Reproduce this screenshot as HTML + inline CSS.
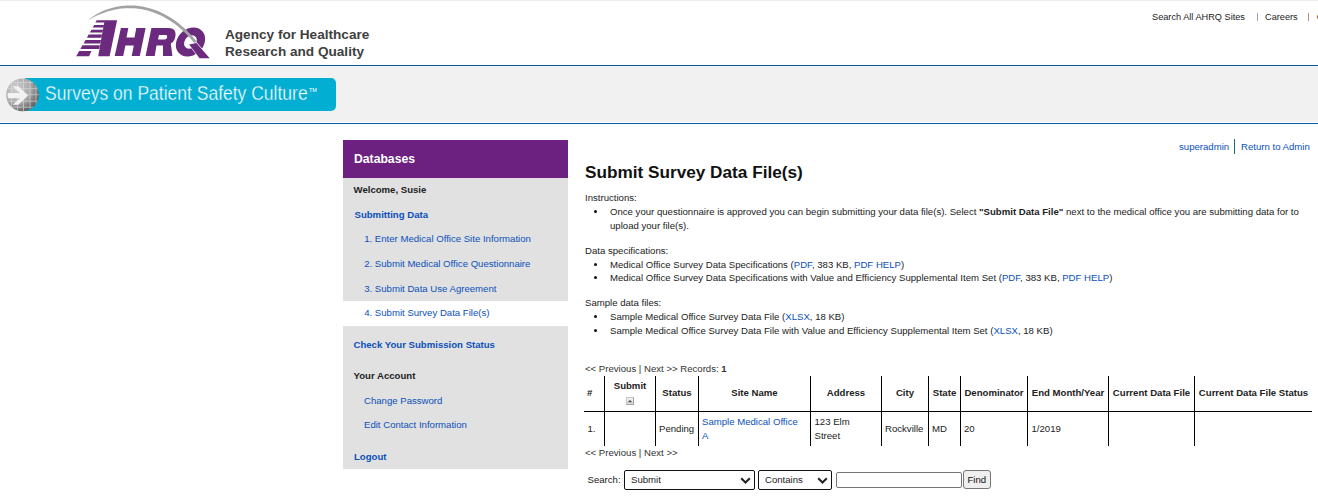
<!DOCTYPE html>
<html><head><meta charset="utf-8"><style>
html,body{margin:0;padding:0;background:#fff;width:1318px;height:497px;overflow:hidden;position:relative}
body{font-family:"Liberation Sans",sans-serif}
.t{position:absolute;white-space:nowrap;line-height:20px}
.r{position:absolute}
</style></head><body>
<div class="r" style="left:0px;top:0px;width:1318px;height:1px;background:#ececec;"></div>
<div class="r" style="left:0px;top:65px;width:1318px;height:1px;background:#03599a;"></div>
<div class="r" style="left:0px;top:66px;width:1318px;height:56px;background:#f1f1f1;"></div>
<div class="r" style="left:0px;top:123px;width:1318px;height:1px;background:#03599a;"></div>
<svg class="r" style="left:0;top:0" width="220" height="64" viewBox="0 0 220 64">
<g fill="#6b2a7d">
<path d="M104.6,20.2 L117.1,20.2 L109.6,56.3 L98.2,56.3 Z"/>
<path d="M96.7,20.2 L105,20.2 L104.5,22.6 L95.4,22.6 Z"/>
<path d="M94.2,24.9 L104,24.9 L103.5,27.4 L92.8,27.4 Z"/>
<path d="M91.5,29.7 L103,29.7 L102.4,32.5 L89.9,32.5 Z"/>
<path d="M88.6,34.6 L102,34.6 L101.4,37.7 L86.9,37.7 Z"/>
<path d="M85.5,40 L101,40 L100.3,43.4 L83.6,43.4 Z"/>
<path d="M82.4,45.3 L100,45.3 L99.2,49 L80.4,49 Z"/>
<path d="M79.2,51 L91.5,51 L89,56.3 L76.2,56.3 Z"/>
<path d="M120.9,28 L128.3,28 L126.5,37.4 L134.5,37.4 L136.3,28 L145.6,28 L139.8,56 L131.7,56 L133.8,45.6 L125.4,45.6 L123.2,56 L114.7,56 Z"/>
<path fill-rule="evenodd" d="M151.4,28 L168.5,28 C174,28 176,31 175.5,35.5 C175,40 173,42.5 170.8,43.6 L172.4,56 L163,56 L163,45.5 L156.5,45.5 L154.7,56 L145.6,56 Z M159,34.9 L165.9,34.9 C167.2,34.9 167.4,36.4 167,37.6 C166.6,39 165.6,39.6 164,39.6 L158,39.6 Z"/>
<path fill-rule="evenodd" transform="translate(190.5,42.1) skewX(-12)" d="M-14.3,0 A14.3,14.5 0 1 0 14.3,0 A14.3,14.5 0 1 0 -14.3,0 Z M-6.3,-0.1 A6.3,6.65 0 1 0 6.3,-0.1 A6.3,6.65 0 1 0 -6.3,-0.1 Z"/>
</g>
<path d="M89.43,19.41 L91.45,18.30 L93.46,17.26 L95.47,16.28 L97.47,15.37 L99.48,14.53 L101.48,13.75 L103.46,13.00 L105.42,12.26 L107.38,11.60 L109.34,10.99 L111.30,10.44 L113.26,9.95 L115.21,9.52 L117.16,9.15 L119.11,8.84 L121.05,8.58 L122.99,8.39 L124.92,8.24 L126.85,8.16 L128.77,8.13 L130.69,8.14 L132.60,8.19 L134.50,8.30 L136.40,8.47 L138.29,8.68 L140.18,8.95 L142.05,9.27 L143.92,9.64 L145.78,10.06 L147.63,10.53 L149.46,11.05 L151.29,11.63 L153.11,12.25 L154.92,12.91 L156.71,13.63 L158.49,14.39 L160.26,15.20 L162.02,16.06 L163.76,16.96 L165.49,17.91 L167.20,18.90 L168.90,19.94 L170.58,21.02 L172.24,22.14 L173.89,23.31 L175.52,24.52 L177.13,25.77 L178.72,27.07 L180.29,28.40 L181.85,29.78 L183.38,31.19 L184.89,32.64 L186.39,34.14 L187.85,35.67 L189.30,37.24 L190.73,38.85 L192.13,40.49 L193.50,42.17 L194.86,43.90 L197.14,42.10 L195.76,40.36 L194.34,38.64 L192.90,36.95 L191.43,35.31 L189.94,33.70 L188.43,32.13 L186.90,30.60 L185.34,29.11 L183.76,27.66 L182.15,26.25 L180.53,24.88 L178.89,23.55 L177.23,22.27 L175.54,21.02 L173.84,19.82 L172.12,18.67 L170.38,17.56 L168.63,16.49 L166.86,15.47 L165.07,14.49 L163.27,13.57 L161.45,12.68 L159.61,11.85 L157.77,11.07 L155.91,10.33 L154.03,9.64 L152.15,9.00 L150.25,8.42 L148.34,7.88 L146.42,7.39 L144.49,6.96 L142.54,6.58 L140.59,6.25 L138.64,5.98 L136.67,5.76 L134.70,5.60 L132.72,5.49 L130.73,5.43 L128.74,5.44 L126.74,5.52 L124.74,5.66 L122.74,5.86 L120.73,6.12 L118.73,6.43 L116.72,6.80 L114.71,7.24 L112.71,7.73 L110.70,8.28 L108.70,8.90 L106.69,9.58 L104.70,10.32 L102.70,11.12 L100.72,12.02 L98.77,13.03 L96.83,14.09 L94.90,15.22 L92.98,16.41 L91.07,17.67 L89.17,18.99Z" fill="#a0a2a4"/>
<path d="M189.2,44.5 L196.4,42.9 L209.7,58.2 L199.6,58.2 Z" fill="#6b2a7d" stroke="#fff" stroke-width="1.1" paint-order="stroke"/>
</svg>
<div class="t" style="left:225px;top:25px;font-size:13.6px;font-weight:bold;color:#404040;">Agency for Healthcare</div>
<div class="t" style="left:225px;top:42px;font-size:13.6px;font-weight:bold;color:#404040;">Research and Quality</div>
<div class="t" style="left:1152px;top:7px;font-size:9.2px;color:#222;">Search All AHRQ Sites</div>
<div class="r" style="left:1257px;top:13px;width:1px;height:8px;background:#96a0c8;"></div>
<div class="t" style="left:1265px;top:7px;font-size:9.2px;color:#222;">Careers</div>
<div class="r" style="left:1308px;top:13px;width:1px;height:8px;background:#b88c90;"></div>
<div class="t" style="left:1316.8px;top:7px;font-size:9.2px;color:#222;">Contact Us</div>
<div class="r" style="left:25px;top:78px;width:311px;height:33px;background:#02afd3;border-radius:0 5px 5px 0"></div>
<svg class="r" style="left:5px;top:77px" width="36" height="36" viewBox="0 0 36 36">
<defs><radialGradient id="cg" cx="0.3" cy="0.3" r="0.85"><stop offset="0" stop-color="#d0d0d0"/><stop offset="0.55" stop-color="#a6a6a6"/><stop offset="0.9" stop-color="#5e5e5e"/><stop offset="1" stop-color="#8a8a8a"/></radialGradient>
<clipPath id="cc"><circle cx="17.5" cy="17.9" r="16.3"/></clipPath></defs>
<circle cx="17.5" cy="17.9" r="16.3" fill="url(#cg)"/>
<g clip-path="url(#cc)" stroke="#dcdcdc" stroke-width="0.9" opacity="0.7">
<path d="M0,5.6H36M0,11.7H36M0,17.7H36M0,24.2H36M0,30.2H36M6.5,0V36M12.5,0V36M18.5,0V36M25,0V36M31,0V36"/>
</g>
<path d="M2.8,16.1 L14.9,16.1 L7.7,9.3 L13.3,9.3 L23,18.6 L13.3,27.8 L7.7,27.8 L14.9,21.2 L2.8,21.2 Z" fill="#f2f2f2"/>
</svg>
<div class="t" style="left:45px;top:83px;font-size:20px;color:#fff;transform-origin:0 0;transform:scaleX(0.875);-webkit-text-stroke:0.35px #04b0d3">Surveys on Patient Safety Culture</div>
<div class="t" style="left:309px;top:80px;font-size:5.5px;color:#fff;">TM</div>
<div class="r" style="left:343px;top:140px;width:225px;height:38px;background:#6c2180;"></div>
<div class="r" style="left:343px;top:178px;width:225px;height:123px;background:#e1e1e1;"></div>
<div class="r" style="left:343px;top:326px;width:225px;height:143px;background:#e1e1e1;"></div>
<div class="t" style="left:354px;top:149px;font-size:12.2px;font-weight:bold;color:#fff;">Databases</div>
<div class="t" style="left:353.5px;top:180px;font-size:9.6px;font-weight:bold;color:#222;">Welcome, Susie</div>
<div class="t" style="left:354.5px;top:205px;font-size:9.6px;font-weight:bold;color:#0a50bb;">Submitting Data</div>
<div class="t" style="left:364.2px;top:229px;font-size:9.6px;color:#0a50bb;">1. Enter Medical Office Site Information</div>
<div class="t" style="left:364.2px;top:254px;font-size:9.6px;color:#0a50bb;">2. Submit Medical Office Questionnaire</div>
<div class="t" style="left:364.2px;top:279px;font-size:9.6px;color:#0a50bb;">3. Submit Data Use Agreement</div>
<div class="t" style="left:364.2px;top:303px;font-size:9.6px;color:#0a50bb;">4. Submit Survey Data File(s)</div>
<div class="t" style="left:353.5px;top:335px;font-size:9.6px;font-weight:bold;color:#0a50bb;">Check Your Submission Status</div>
<div class="t" style="left:353.5px;top:366px;font-size:9.6px;font-weight:bold;color:#222;">Your Account</div>
<div class="t" style="left:364px;top:391px;font-size:9.6px;color:#0a50bb;">Change Password</div>
<div class="t" style="left:364px;top:415px;font-size:9.6px;color:#0a50bb;">Edit Contact Information</div>
<div class="t" style="left:354px;top:447px;font-size:9.6px;font-weight:bold;color:#0a50bb;">Logout</div>
<div class="t" style="left:1179px;top:137px;font-size:9.6px;color:#0a50bb;">superadmin</div>
<div class="r" style="left:1234px;top:139px;width:1px;height:15px;background:#1d6878;"></div>
<div class="t" style="left:1241px;top:137px;font-size:9.6px;color:#0a50bb;">Return to Admin</div>
<div class="t" style="left:585px;top:162px;font-size:17.2px;font-weight:bold;color:#111;">Submit Survey Data File(s)</div>
<div class="t" style="left:585px;top:188px;font-size:9.6px;color:#222;">Instructions:</div>
<div class="r" style="left:593.8px;top:210.2px;width:3.2px;height:3.2px;border-radius:50%;background:#111"></div>
<div class="t" style="left:610px;top:202px;font-size:9.6px;color:#222;">Once your questionnaire is approved you can begin submitting your data file(s). Select <b>"Submit Data File"</b> next to the medical office you are submitting data for to</div>
<div class="t" style="left:610px;top:216px;font-size:9.6px;color:#222;">upload your file(s).</div>
<div class="t" style="left:585px;top:241px;font-size:9.6px;color:#222;">Data specifications:</div>
<div class="r" style="left:593.8px;top:263.2px;width:3.2px;height:3.2px;border-radius:50%;background:#111"></div>
<div class="t" style="left:610px;top:255px;font-size:9.6px;color:#222;">Medical Office Survey Data Specifications (<span style="color:#0a50bb">PDF</span>, 383 KB, <span style="color:#0a50bb">PDF HELP</span>)</div>
<div class="r" style="left:593.8px;top:276.2px;width:3.2px;height:3.2px;border-radius:50%;background:#111"></div>
<div class="t" style="left:610px;top:268px;font-size:9.6px;color:#222;">Medical Office Survey Data Specifications with Value and Efficiency Supplemental Item Set (<span style="color:#0a50bb">PDF</span>, 383 KB, <span style="color:#0a50bb">PDF HELP</span>)</div>
<div class="t" style="left:585px;top:293px;font-size:9.6px;color:#222;">Sample data files:</div>
<div class="r" style="left:593.8px;top:315.2px;width:3.2px;height:3.2px;border-radius:50%;background:#111"></div>
<div class="t" style="left:610px;top:307px;font-size:9.6px;color:#222;">Sample Medical Office Survey Data File (<span style="color:#0a50bb">XLSX</span>, 18 KB)</div>
<div class="r" style="left:593.8px;top:329.2px;width:3.2px;height:3.2px;border-radius:50%;background:#111"></div>
<div class="t" style="left:610px;top:321px;font-size:9.6px;color:#222;">Sample Medical Office Survey Data File with Value and Efficiency Supplemental Item Set (<span style="color:#0a50bb">XLSX</span>, 18 KB)</div>
<div class="t" style="left:585px;top:359px;font-size:9.6px;color:#333;">&lt;&lt; Previous | Next &gt;&gt; Records: <b>1</b></div>
<div class="r" style="left:584px;top:411px;width:728px;height:1px;background:#000;"></div>
<div class="r" style="left:604px;top:376px;width:1px;height:70px;background:#000;"></div>
<div class="r" style="left:655px;top:376px;width:1px;height:70px;background:#000;"></div>
<div class="r" style="left:698px;top:376px;width:1px;height:70px;background:#000;"></div>
<div class="r" style="left:810px;top:376px;width:1px;height:70px;background:#000;"></div>
<div class="r" style="left:881px;top:376px;width:1px;height:70px;background:#000;"></div>
<div class="r" style="left:928px;top:376px;width:1px;height:70px;background:#000;"></div>
<div class="r" style="left:960px;top:376px;width:1px;height:70px;background:#000;"></div>
<div class="r" style="left:1027px;top:376px;width:1px;height:70px;background:#000;"></div>
<div class="r" style="left:1108px;top:376px;width:1px;height:70px;background:#000;"></div>
<div class="r" style="left:1194px;top:376px;width:1px;height:70px;background:#000;"></div>
<div class="t" style="left:587px;top:383px;font-size:9.6px;font-weight:bold;color:#222;">#</div>
<div class="t" style="left:605px;width:50px;text-align:center;top:376px;font-size:9.6px;font-weight:bold;color:#222">Submit</div>
<div class="r" style="left:626px;top:397px;width:8px;height:8px;box-sizing:border-box;border:1px solid #c6c6c6;border-right-color:#a4a4a4;border-bottom-color:#a4a4a4;background:linear-gradient(#f4f4f4,#dadada)"></div><svg class="r" style="left:626px;top:397px" width="8" height="8"><path d="M1.7,5.3 L4,2.9 L6.3,5.3 Z" fill="#4a4a4a"/></svg>
<div class="t" style="left:656px;width:42px;text-align:center;top:383px;font-size:9.6px;font-weight:bold;color:#222">Status</div>
<div class="t" style="left:699px;width:111px;text-align:center;top:383px;font-size:9.6px;font-weight:bold;color:#222">Site Name</div>
<div class="t" style="left:811px;width:70px;text-align:center;top:383px;font-size:9.6px;font-weight:bold;color:#222">Address</div>
<div class="t" style="left:882px;width:46px;text-align:center;top:383px;font-size:9.6px;font-weight:bold;color:#222">City</div>
<div class="t" style="left:929px;width:31px;text-align:center;top:383px;font-size:9.6px;font-weight:bold;color:#222">State</div>
<div class="t" style="left:961px;width:66px;text-align:center;top:383px;font-size:9.6px;font-weight:bold;color:#222">Denominator</div>
<div class="t" style="left:1028px;width:80px;text-align:center;top:383px;font-size:9.6px;font-weight:bold;color:#222">End Month/Year</div>
<div class="t" style="left:1109px;width:85px;text-align:center;top:383px;font-size:9.6px;font-weight:bold;color:#222">Current Data File</div>
<div class="t" style="left:1195px;width:117px;text-align:center;top:383px;font-size:9.6px;font-weight:bold;color:#222">Current Data File Status</div>
<div class="t" style="left:587.5px;top:419px;font-size:9.6px;color:#222;">1.</div>
<div class="t" style="left:659px;top:419px;font-size:9.6px;color:#222;">Pending</div>
<div class="t" style="left:702px;top:412px;font-size:9.6px;color:#0a50bb;">Sample Medical Office</div>
<div class="t" style="left:702px;top:426px;font-size:9.6px;color:#0a50bb;">A</div>
<div class="t" style="left:814.5px;top:412px;font-size:9.6px;color:#222;">123 Elm</div>
<div class="t" style="left:814.5px;top:426px;font-size:9.6px;color:#222;">Street</div>
<div class="t" style="left:885px;top:419px;font-size:9.6px;color:#222;">Rockville</div>
<div class="t" style="left:932px;top:419px;font-size:9.6px;color:#222;">MD</div>
<div class="t" style="left:964px;top:419px;font-size:9.6px;color:#222;">20</div>
<div class="t" style="left:1031.5px;top:419px;font-size:9.6px;color:#222;">1/2019</div>
<div class="t" style="left:585px;top:443px;font-size:9.6px;color:#333;">&lt;&lt; Previous | Next &gt;&gt;</div>
<div class="t" style="left:587.5px;top:470px;font-size:9.6px;color:#222;">Search:</div>
<div class="r" style="left:624px;top:470px;width:129px;height:18px;background:#fff;border:1px solid #111;border-radius:2px"></div>
<div class="t" style="left:631px;top:470px;font-size:9.6px;color:#222;">Submit</div>
<svg class="r" style="left:740px;top:476.5px" width="12" height="8"><path d="M1.2,1.2 L5.5,5.5 L9.8,1.2" fill="none" stroke="#222" stroke-width="2"/></svg>
<div class="r" style="left:758px;top:470px;width:72px;height:18px;background:#fff;border:1px solid #111;border-radius:2px"></div>
<div class="t" style="left:765px;top:470px;font-size:9.6px;color:#222;">Contains</div>
<svg class="r" style="left:817px;top:476.5px" width="12" height="8"><path d="M1.2,1.2 L5.5,5.5 L9.8,1.2" fill="none" stroke="#222" stroke-width="2"/></svg>
<div class="r" style="left:836px;top:472px;width:124px;height:14px;background:#fff;border:1px solid #767676;border-radius:2px"></div>
<div class="r" style="left:963px;top:470px;width:26px;height:17px;background:#efefef;border:1px solid #767676;border-radius:3px"></div>
<div class="t" style="left:967.5px;top:470px;font-size:9.6px;color:#111;">Find</div>
</body></html>
